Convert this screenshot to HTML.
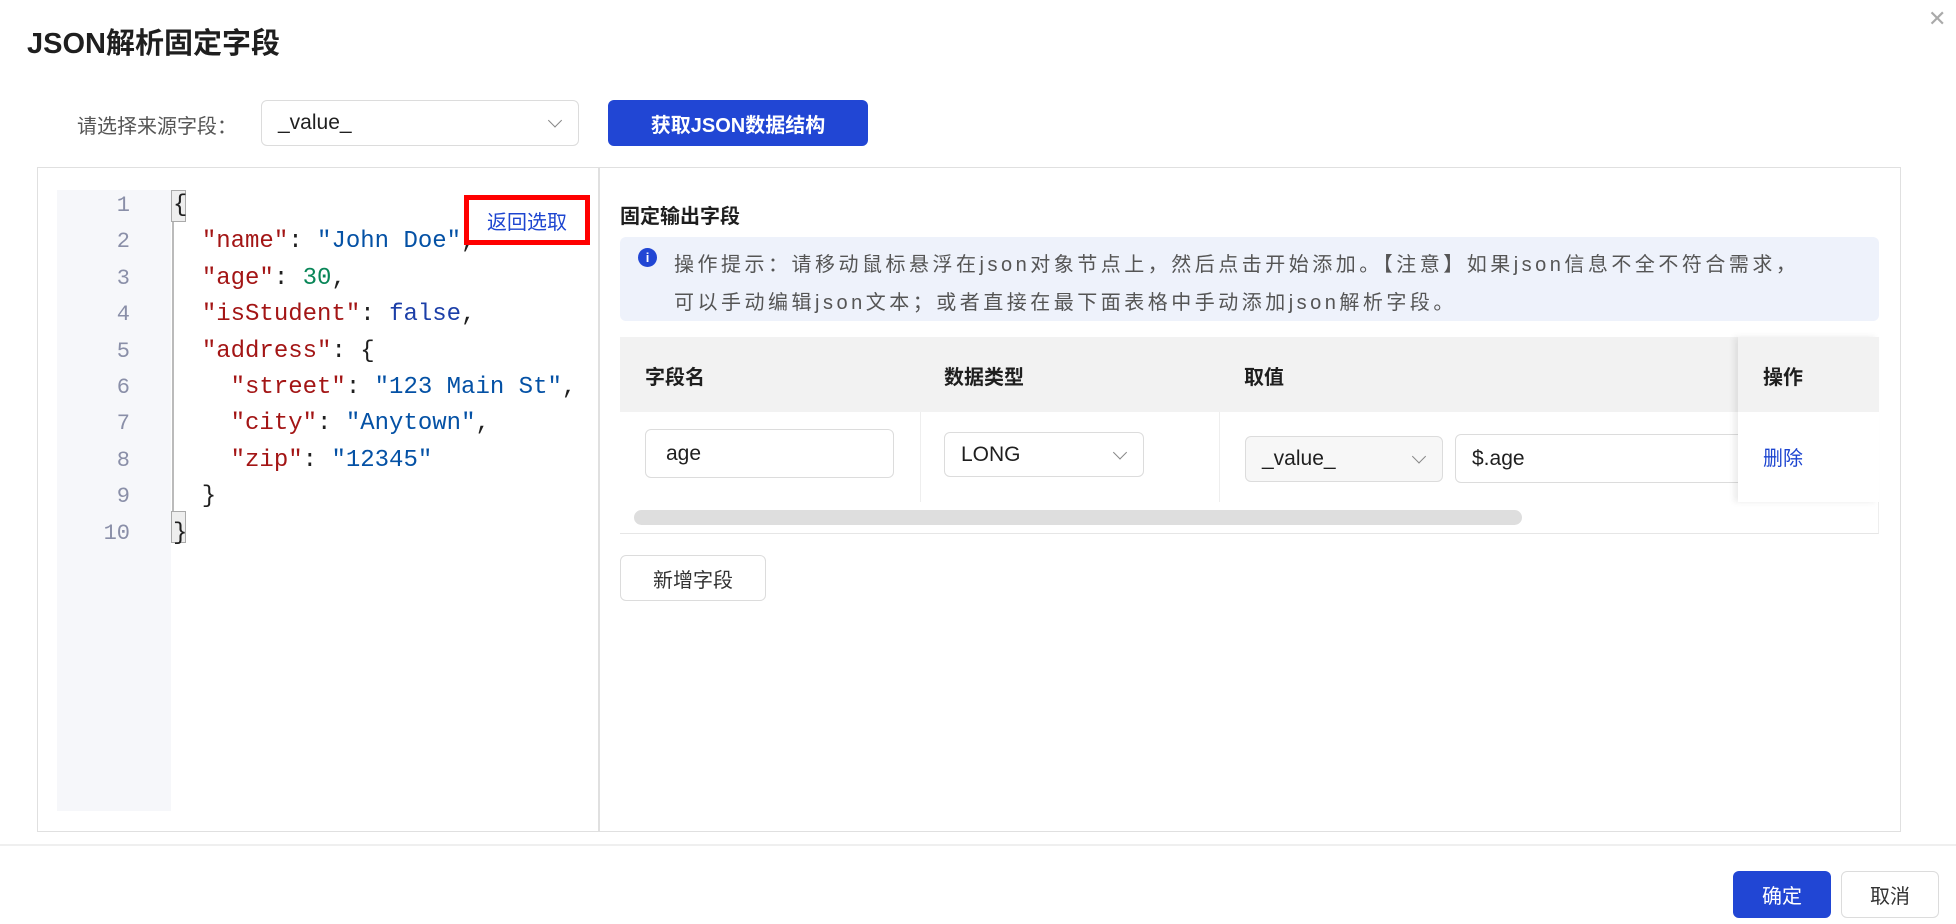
<!DOCTYPE html>
<html><head><meta charset="utf-8"><style>
*{box-sizing:border-box;margin:0;padding:0}
body{width:1956px;height:924px;background:#fff;font-family:"Liberation Sans","Noto Sans CJK SC",sans-serif;color:#1f1f1f;position:relative;overflow:hidden}
.a{position:absolute}
.mono{font-family:"Liberation Mono","DejaVu Sans Mono",monospace;font-size:24px;white-space:pre}
.k{color:#a31515}.s{color:#0451a5}.n{color:#098658}.b{color:#1c3fa8}
.inp{position:absolute;border:1.5px solid #dcdcdc;border-radius:6px;background:#fff;font-size:21px;display:flex;align-items:center;padding-left:16px}
.chev{position:absolute;right:18px;top:50%;width:10px;height:10px;border-right:1.2px solid #888;border-bottom:1.2px solid #888;transform:translateY(-75%) rotate(45deg)}
.btn{position:absolute;border-radius:6px;display:flex;align-items:center;justify-content:center;font-size:20px}
</style></head><body>
<div class="a" style="left:27px;top:20px;font-size:29px;font-weight:bold">JSON解析固定字段</div>
<div class="a" style="left:1928px;top:6px;font-size:22px;color:#aaa">✕</div>
<div class="a" style="left:77px;top:110px;font-size:20px;color:#555">请选择来源字段：</div>
<div class="inp" style="left:261px;top:100px;width:318px;height:46px">_value_<span class="chev"></span></div>
<div class="btn" style="left:608px;top:100px;width:260px;height:46px;background:#2146d4;color:#fff;font-weight:bold">获取JSON数据结构</div>
<div class="a" style="left:37px;top:167px;width:1864px;height:665px;border:1.5px solid #e0e0e0"></div>
<div class="a" style="left:598px;top:167px;width:1.5px;height:665px;background:#e0e0e0"></div>
<div class="a" style="left:57px;top:190px;width:114px;height:621px;background:#f6f7fa"></div>
<div class="a" style="left:172px;top:222px;width:2px;height:320px;background:#bbb"></div>
<div class="a" style="left:171px;top:190px;width:15px;height:32px;background:#eee;border:1.5px solid #aaa"></div>
<div class="a" style="left:171px;top:511px;width:15px;height:32px;background:#eee;border:1.5px solid #aaa"></div>
<div class="a mono" style="left:80px;top:188px;width:50px;text-align:right;line-height:36.4px;color:#8a8fa8;font-size:22px">1
2
3
4
5
6
7
8
9
10</div>
<div class="a mono" style="left:173px;top:188px;line-height:36.4px">{
  <span class="k">"name"</span>: <span class="s">"John Doe"</span>,
  <span class="k">"age"</span>: <span class="n">30</span>,
  <span class="k">"isStudent"</span>: <span class="b">false</span>,
  <span class="k">"address"</span>: {
    <span class="k">"street"</span>: <span class="s">"123 Main St"</span>,
    <span class="k">"city"</span>: <span class="s">"Anytown"</span>,
    <span class="k">"zip"</span>: <span class="s">"12345"</span>
  }
}</div>
<div class="a" style="left:464px;top:195px;width:126px;height:50px;border:5px solid #f00;background:#fff;color:#1d45d0;font-size:20px;display:flex;align-items:center;justify-content:center">返回选取</div>
<div class="a" style="left:620px;top:200px;font-size:20px;font-weight:bold">固定输出字段</div>
<div class="a" style="left:620px;top:237px;width:1259px;height:84px;background:#eef2fb;border-radius:6px"></div>
<div class="a" style="left:638px;top:248px;width:19px;height:19px;border-radius:50%;background:#2146d4;color:#fff;font-size:13px;font-weight:bold;text-align:center;line-height:19px">i</div>
<div class="a" style="left:674px;top:246px;font-size:20px;letter-spacing:3.5px;color:#555;line-height:38px;white-space:nowrap">操作提示：请移动鼠标悬浮在json对象节点上，然后点击开始添加。【注意】如果json信息不全不符合需求，<br>可以手动编辑json文本；或者直接在最下面表格中手动添加json解析字段。</div>
<div class="a" style="left:620px;top:337px;width:1259px;height:197px;border-bottom:1.5px solid #e6e6e6;border-right:1.5px solid #eee"></div>
<div class="a" style="left:620px;top:337px;width:1259px;height:75px;background:#f2f2f2"></div>
<div class="a" style="left:645px;top:361px;font-size:20px;font-weight:bold">字段名</div>
<div class="a" style="left:944px;top:361px;font-size:20px;font-weight:bold">数据类型</div>
<div class="a" style="left:1244px;top:361px;font-size:20px;font-weight:bold">取值</div>
<div class="a" style="left:920px;top:412px;width:1px;height:90px;background:#eee"></div>
<div class="a" style="left:1219px;top:412px;width:1px;height:90px;background:#eee"></div>
<div class="inp" style="left:645px;top:429px;width:249px;height:49px;padding-left:20px">age</div>
<div class="inp" style="left:944px;top:432px;width:200px;height:45px">LONG<span class="chev"></span></div>
<div class="inp" style="left:1245px;top:436px;width:198px;height:46px;background:#f7f7f7">_value_<span class="chev"></span></div>
<div class="inp" style="left:1455px;top:434px;width:300px;height:49px">$.age</div>
<div class="a" style="left:1738px;top:337px;width:141px;height:165px;background:#fff;box-shadow:-4px 0 6px rgba(0,0,0,.08)"></div>
<div class="a" style="left:1738px;top:337px;width:141px;height:75px;background:#f2f2f2"></div>
<div class="a" style="left:1763px;top:361px;font-size:20px;font-weight:bold">操作</div>
<div class="a" style="left:1763px;top:442px;font-size:20px;color:#1d45d0">删除</div>
<div class="a" style="left:634px;top:510px;width:888px;height:15px;background:#dedede;border-radius:8px"></div>
<div class="btn" style="left:620px;top:555px;width:146px;height:46px;border:1.5px solid #dcdcdc;color:#333">新增字段</div>
<div class="a" style="left:0;top:844px;width:1956px;height:2px;background:#efefef"></div>
<div class="btn" style="left:1733px;top:871px;width:98px;height:47px;background:#2146d4;color:#fff">确定</div>
<div class="btn" style="left:1841px;top:871px;width:98px;height:47px;border:1.5px solid #dcdcdc;color:#333">取消</div>
</body></html>
